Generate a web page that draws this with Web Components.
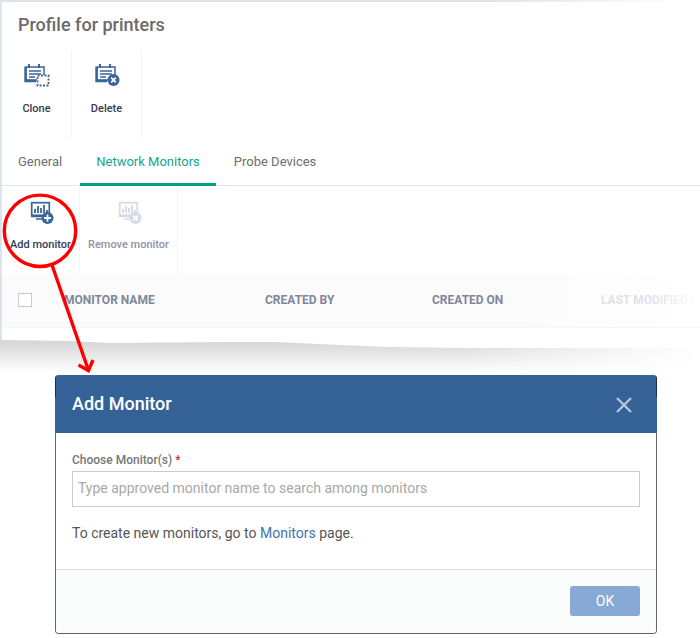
<!DOCTYPE html>
<html>
<head>
<meta charset="utf-8">
<style>
  html, body { margin: 0; background: #fff; }
  body { font-family: Roboto, "Liberation Sans", sans-serif; width: 700px; height: 638px; overflow: hidden; }
</style>
</head>
<body>
<help-page>
  <profile-panel heading="Profile for printers">
    <tool-bar slot="actions" height="88">
      <tool-button icon="clone" width="70" gap="15">Clone</tool-button>
      <tool-button icon="delete" width="70" gap="15">Delete</tool-button>
    </tool-bar>
    <tab-bar slot="tabs">
      <tab-item>General</tab-item>
      <tab-item active>Network Monitors</tab-item>
      <tab-item>Probe Devices</tab-item>
    </tab-bar>
    <tool-bar slot="monitors" height="88">
      <tool-button icon="add" width="78" top="15" gap="13">Add monitor</tool-button>
      <tool-button icon="remove" width="98" top="15" gap="13" disabled>Remove monitor</tool-button>
    </tool-bar>
    <monitor-table slot="table"></monitor-table>
  </profile-panel>
  <torn-edge></torn-edge>
  <add-monitor-dialog>
    <a slot="link">Monitors</a>
  </add-monitor-dialog>
  <callout-mark></callout-mark>
</help-page>

<script>
const ICONS = {
  clone: `<svg width="26" height="24" viewBox="0 0 26 24" fill="none">
    <path d="M2 4H20V12M13 17H2V4" stroke="#3a659c" stroke-width="1.5"/>
    <path d="M1.500 3.500V18H12" stroke="#3a659c" stroke-width="2.4"/>
    <path d="M5 1V5M15 1V5" stroke="#3a659c" stroke-width="2"/>
    <path d="M5 8H17M5 11H17M5 14H11" stroke="#3a659c" stroke-width="1.4"/>
    <rect x="13.500" y="12.500" width="11" height="10" fill="#fff" stroke="#3a659c" stroke-width="1.8" stroke-dasharray="2 1.500"/>
  </svg>`,
  delete: `<svg width="26" height="24" viewBox="-1 0 26 24" fill="none">
    <path d="M2 4H20V13M13 17H2V4" stroke="#3a659c" stroke-width="1.5"/>
    <path d="M1.500 3.500V18H12" stroke="#3a659c" stroke-width="2.4"/>
    <path d="M5 1V5M15 1V5" stroke="#3a659c" stroke-width="2"/>
    <path d="M5 8H17M5 11H17M5 14H11" stroke="#3a659c" stroke-width="1.4"/>
    <circle cx="18.500" cy="17" r="6" fill="#3a659c"/>
    <path d="M16.200 14.700L20.800 19.300M20.800 14.700L16.200 19.300" stroke="#fff" stroke-width="1.7"/>
  </svg>`,
  add: monitorIcon("#3a659c", `<path d="M17.500 13.500V20.500M14 17H21" stroke="#fff" stroke-width="1.8"/>`),
  remove: monitorIcon("#d6dae6", `<path d="M15.200 14.700L19.800 19.300M19.800 14.700L15.200 19.300" stroke="#fff" stroke-width="1.7"/>`)
};

function monitorIcon(color, mark) {
  return `<svg width="26" height="24" viewBox="-2 0 26 24" fill="none">
    <rect x="1.700" y="1.700" width="17.600" height="12.600" stroke="${color}" stroke-width="1.7"/>
    <path d="M5 12V8M8 12V5M11 12V7M14 12V4M17 12V9" stroke="${color}" stroke-width="1.8"/>
    <path d="M1 15.500H13M6 18H13" stroke="${color}" stroke-width="1.5"/>
    <circle cx="17.500" cy="17" r="6" fill="${color}"/>
    ${mark}
  </svg>`;
}

class HelpPage extends HTMLElement {
  connectedCallback() {
    this.attachShadow({ mode: "open" }).innerHTML = `
    <style>
      :host { display: block; position: relative; width: 700px; height: 638px; }
    </style>
    <slot></slot>`;
  }
}

class ProfilePanel extends HTMLElement {
  connectedCallback() {
    this.attachShadow({ mode: "open" }).innerHTML = `
    <style>
      :host { display: block; position: relative; height: 340px; box-sizing: border-box; padding-top: 2px; padding-left: 2px; }
      #top { position: absolute; left: 0; top: 0; right: 0; height: 2px;
        background: linear-gradient(to right, #dbe4ec 70%, #ffffff 98%); }
      #left { position: absolute; left: 0; top: 0; width: 2px; height: 340px; background: #dbe4ec; }
      h1 { margin: 0; height: 48px; box-sizing: border-box; padding: 12px 0 0 16px; font-size: 18px; line-height: 22px; font-weight: 500; color: #6b6b6b; }
      #gap { height: 2px; }
    </style>
    <div id="top"></div>
    <div id="left"></div>
    <h1>${this.getAttribute("heading")}</h1>
    <slot name="actions"></slot>
    <div id="gap"></div>
    <slot name="tabs"></slot>
    <slot name="monitors"></slot>
    <slot name="table"></slot>`;
  }
}

class ToolBar extends HTMLElement {
  connectedCallback() {
    this.attachShadow({ mode: "open" }).innerHTML = `
    <style>
      :host { display: flex; height: ${this.getAttribute("height")}px; }
    </style>
    <slot></slot>`;
  }
}

class ToolButton extends HTMLElement {
  connectedCallback() {
    const top = this.getAttribute("top") || 13;
    const gap = this.getAttribute("gap") || 9;
    const off = this.hasAttribute("disabled");
    this.attachShadow({ mode: "open" }).innerHTML = `
    <style>
      :host { display: flex; flex-direction: column; align-items: center; box-sizing: border-box;
        width: ${this.getAttribute("width")}px; border-right: 1px solid #f4f4f6; padding-top: ${top}px; }
      svg { display: block; flex: none; }
      #label { margin-top: ${gap}px; font-size: 11px; line-height: 14px; font-weight: 500; white-space: nowrap;
        color: ${off ? "#8f93a3" : "#333b55"}; }
    </style>
    ${ICONS[this.getAttribute("icon")]}
    <div id="label"><slot></slot></div>`;
  }
}

class TabBar extends HTMLElement {
  connectedCallback() {
    this.attachShadow({ mode: "open" }).innerHTML = `
    <style>
      :host { display: flex; height: 46px; box-sizing: border-box; border-bottom: 1px solid #e6e6e6; }
    </style>
    <slot></slot>`;
  }
}

class TabItem extends HTMLElement {
  connectedCallback() {
    this.attachShadow({ mode: "open" }).innerHTML = `
    <style>
      :host { display: block; box-sizing: border-box; height: 46px; padding: 13px 16px 0 16px; font-size: 13px; line-height: 17px; color: #6e6e6e; }
      :host(:first-child) { padding-right: 18px; }
      :host(:last-child) { padding-left: 18px; }
      :host([active]) { color: #17a58c; border-bottom: 3px solid #00a37e; }
    </style>
    <slot></slot>`;
  }
}

class MonitorTable extends HTMLElement {
  connectedCallback() {
    this.attachShadow({ mode: "open" }).innerHTML = `
    <style>
      :host { display: grid; grid-template-columns: 62px 201px 167px 169px 1fr; align-items: center; height: 54px; box-sizing: border-box; padding-bottom: 1px;
        background: linear-gradient(to right, #fbfbfc 75%, #fff 100%); border-bottom: 1px solid #f5f5f7;
        font-size: 12px; font-weight: 700; color: #808799; white-space: nowrap; }
      #box { width: 12px; height: 12px; margin-left: 16px; border: 1px solid #c9ccd6; background: #fff; }
      #last { color: #dfe1e8; overflow: hidden;
        -webkit-mask-image: linear-gradient(to right, #000 50%, transparent 100%); mask-image: linear-gradient(to right, #000 50%, transparent 100%); }
    </style>
    <div><div id="box"></div></div>
    <div>MONITOR NAME</div>
    <div>CREATED BY</div>
    <div>CREATED ON</div>
    <div id="last">LAST MODIFIED BY</div>`;
  }
}

class TornEdge extends HTMLElement {
  connectedCallback() {
    this.attachShadow({ mode: "open" }).innerHTML = `
    <style>
      :host { display: block; height: 35px; }
      svg { display: block; }
    </style>
    <svg width="700" height="35" viewBox="0 0 700 35">
      <defs>
        <linearGradient id="down" x1="0" y1="0" x2="0" y2="1">
          <stop offset="0" stop-color="#d4d4d4"/>
          <stop offset="1" stop-color="#ffffff"/>
        </linearGradient>
        <linearGradient id="across">
          <stop offset="0.65" stop-color="#fff"/>
          <stop offset="1" stop-color="#000"/>
        </linearGradient>
        <mask id="fade"><rect width="700" height="35" fill="url(#across)"/></mask>
      </defs>
      <path mask="url(#fade)" fill="url(#down)" d="M0 0L70 1L110 3L230 2L275 2L340 5L390 7L470 8L590 8L700 7V33H0Z"/>
    </svg>`;
  }
}

class AddMonitorDialog extends HTMLElement {
  connectedCallback() {
    this.attachShadow({ mode: "open" }).innerHTML = `
    <style>
      :host { display: flex; flex-direction: column; box-sizing: border-box; width: 602px; height: 259px; margin-left: 55px;
        border: 1px solid #666; border-top: 0; border-radius: 4px; background: #fff; }
      header { display: flex; align-items: center; justify-content: space-between; box-sizing: border-box; height: 58px; flex: none;
        margin: 0 -1px; padding: 0 25px 2px 17px; border-radius: 4px 4px 0 0; color: #fff; font-size: 18px; font-weight: 500;
        background: linear-gradient(#1f2d42, #1f2d42) left top / 1px 22px no-repeat,
          linear-gradient(#1f2d42, #1f2d42) right top / 1px 22px no-repeat, #356296; }
      svg { display: block; margin-top: 3px; }
      main { flex: 1; padding: 19px 16px 0; }
      label { display: block; font-size: 12px; line-height: 16px; font-weight: 500; color: #777; }
      label b { color: #c9302c; font-weight: 500; }
      #field { box-sizing: border-box; height: 36px; margin-top: 3px; padding: 0 5px; border: 1px solid #ccc;
        font-size: 14px; line-height: 32px; color: #a8a8a8; }
      p { margin: 17px 0 0; font-size: 14px; line-height: 18px; color: #555; }
      ::slotted(a) { color: #3f74ad; }
      footer { display: flex; justify-content: flex-end; align-items: center; flex: none; box-sizing: border-box; height: 64px; padding: 0 16px 1px;
        background: #fafbfb; border-top: 1px solid #ddd; border-radius: 0 0 3px 3px; }
      button { width: 70px; height: 30px; border: 0; border-radius: 3px; background: #86a9d5; color: #fff; font: 400 14px Roboto, sans-serif; }
    </style>
    <header>
      <span>Add Monitor</span>
      <svg width="16" height="16" viewBox="0 0 16 16"><path d="M1 1L15 15M15 1L1 15" stroke="#b4c5d8" stroke-width="2.4"/></svg>
    </header>
    <main>
      <label>Choose Monitor(s) <b>*</b></label>
      <div id="field">Type approved monitor name to search among monitors</div>
      <p>To create new monitors, go to <slot name="link"></slot> page.</p>
    </main>
    <footer><button>OK</button></footer>`;
  }
}

class CalloutMark extends HTMLElement {
  connectedCallback() {
    this.attachShadow({ mode: "open" }).innerHTML = `
    <style>
      :host { position: absolute; left: 0; top: 0; width: 700px; height: 638px; pointer-events: none; }
      svg { display: block; }
    </style>
    <svg width="700" height="638" viewBox="0 0 700 638" fill="none" stroke="#f00" stroke-width="3.400">
      <circle cx="40" cy="230.800" r="35.700"/>
      <path d="M52 265L88 369"/>
      <path d="M78.500 365L88.500 370.500L93 360"/>
    </svg>`;
  }
}

customElements.define("help-page", HelpPage);
customElements.define("profile-panel", ProfilePanel);
customElements.define("tool-bar", ToolBar);
customElements.define("tool-button", ToolButton);
customElements.define("tab-bar", TabBar);
customElements.define("tab-item", TabItem);
customElements.define("monitor-table", MonitorTable);
customElements.define("torn-edge", TornEdge);
customElements.define("add-monitor-dialog", AddMonitorDialog);
customElements.define("callout-mark", CalloutMark);
</script>
</body>
</html>
